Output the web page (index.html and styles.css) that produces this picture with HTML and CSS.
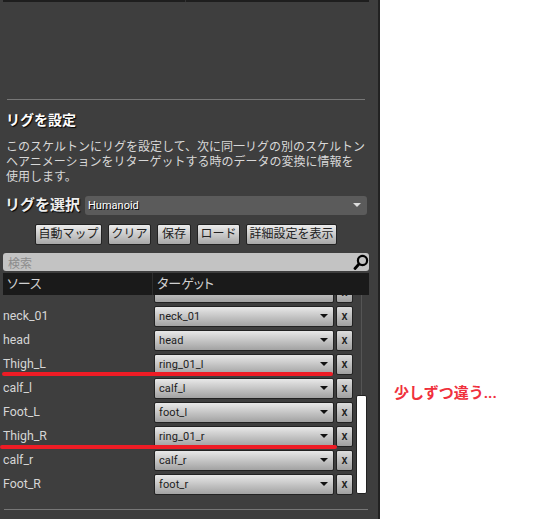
FILE: index.html
```html
<!DOCTYPE html>
<html lang="ja">
<head>
    <meta charset="UTF-8">
    <title>リグを設定</title>
    <link rel="stylesheet" href="styles.css">
</head>
<body>
    <div class="panel">
        <div class="top-bar"><span class="top-split"></span></div>
        <div class="divider first"></div>
        <h2 class="title">リグを設定</h2>
        <p class="desc">このスケルトンにリグを設定して、次に同一リグの別のスケルトン<br>ヘアニメーションをリターゲットする時のデータの変換に情報を<br>使用します。</p>

        <div class="rig-select">
            <span class="rig-label">リグを選択</span>
            <div class="rig-combo">
                <span>Humanoid</span>
                <span class="arrow light"></span>
            </div>
        </div>

        <div class="buttons">
            <button>自動マップ</button>
            <button>クリア</button>
            <button>保存</button>
            <button>ロード</button>
            <button>詳細設定を表示</button>
        </div>

        <div class="search">
            <span>検索</span>
            <svg class="search-icon" width="16" height="16" viewBox="0 0 16 16">
                <circle cx="9.5" cy="6.5" r="4.6" fill="none" stroke="#000" stroke-width="2.2"/>
                <path d="M6 10 L2 14.5" stroke="#000" stroke-width="2.8" stroke-linecap="round"/>
            </svg>
        </div>

        <div class="table-head">
            <div class="col-source">ソース</div>
            <div class="col-target">ターゲット</div>
        </div>

        <div class="table-body">
            <div class="rows">
                <div class="row"><span class="name"></span><div class="combo"><span></span><span class="arrow"></span></div><div class="clear">x</div></div>
                <div class="row"><span class="name">neck_01</span><div class="combo"><span>neck_01</span><span class="arrow"></span></div><div class="clear">x</div></div>
                <div class="row"><span class="name">head</span><div class="combo"><span>head</span><span class="arrow"></span></div><div class="clear">x</div></div>
                <div class="row"><span class="name">Thigh_L</span><div class="combo"><span>ring_01_l</span><span class="arrow"></span></div><div class="clear">x</div></div>
                <div class="row"><span class="name">calf_l</span><div class="combo"><span>calf_l</span><span class="arrow"></span></div><div class="clear">x</div></div>
                <div class="row"><span class="name">Foot_L</span><div class="combo"><span>foot_l</span><span class="arrow"></span></div><div class="clear">x</div></div>
                <div class="row"><span class="name">Thigh_R</span><div class="combo"><span>ring_01_r</span><span class="arrow"></span></div><div class="clear">x</div></div>
                <div class="row"><span class="name">calf_r</span><div class="combo"><span>calf_r</span><span class="arrow"></span></div><div class="clear">x</div></div>
                <div class="row"><span class="name">Foot_R</span><div class="combo"><span>foot_r</span><span class="arrow"></span></div><div class="clear">x</div></div>
            </div>
            <div class="scrollbar">
                <div class="track"></div>
                <div class="thumb"></div>
            </div>
        </div>

        <div class="divider last"></div>

        <!-- red marks drawn over the screenshot -->
        <div class="mark mark-left"></div>
        <div class="mark mark-right"></div>
    </div>

    <div class="note">少しずつ違う...</div>
</body>
</html>
```

FILE: styles.css
```css
* {
    box-sizing: border-box;
}

html, body {
    height: 100%;
}

body {
    margin: 0;
    display: flex;
    background-color: #fff;
    font-family: Roboto, "Noto Sans CJK JP", sans-serif;
    overflow: hidden;
}

.panel {
    position: relative;
    width: 380px;
    height: 519px;
    flex: none;
    background-color: #3e3e3e;
    border-right: 2px solid #222;
    overflow: hidden;
}

.top-bar {
    position: relative;
    height: 2px;
    margin: 0 9px 0 3px;
    background-color: #1e1e1e;
}

.top-split {
    position: absolute;
    left: 182px;
    top: 0;
    width: 1px;
    height: 2px;
    background-color: #333;
}

.divider {
    height: 1px;
    background-color: #777;
}

.divider.first {
    margin: 97px 13px 0 7px;
}

.divider.last {
    margin: 13px 10px 0 4px;
}

.title {
    margin: 10px 0 0 6px;
    font-size: 14px;
    line-height: 20px;
    font-weight: 700;
    color: #fff;
    text-shadow: 1px 1px 1px #000;
}

.desc {
    margin: 10px 0 0 6px;
    font-size: 12px;
    line-height: 15px;
    color: #d8d8d8;
}

.rig-select {
    display: flex;
    align-items: center;
    gap: 5px;
    margin: 10px 11px 0 5px;
}

.rig-label {
    font-size: 15px;
    line-height: 20px;
    font-weight: 700;
    color: #eee;
    text-shadow: 1px 1px 1px #000;
}

.rig-combo {
    flex: 1;
    height: 19px;
    padding: 0 6px 0 3px;
    display: flex;
    align-items: center;
    justify-content: space-between;
    background-color: #5b5b5b;
    border-radius: 3px;
    font-size: 11px;
    color: #fff;
    text-shadow: 1px 1px 0 #000;
}

.buttons {
    display: flex;
    justify-content: center;
    gap: 6px;
    margin: 9px 0 0 0;
    padding-right: 24px;
    padding-left: 18px;
}

button {
    height: 21px;
    min-width: 34px;
    padding: 0 2.5px;
    border: 1px solid #222;
    border-radius: 2px;
    background: linear-gradient(#ececec, #a8a8a8);
    font-family: inherit;
    font-size: 12px;
    line-height: 17px;
    color: #222;
}

.search {
    display: flex;
    align-items: center;
    justify-content: space-between;
    height: 18px;
    margin: 8px 9px 0 3px;
    padding: 0 0 0 5px;
    background-color: #c3c3c3;
    border-radius: 3px;
    font-size: 12px;
    color: #8c8c8c;
}

.table-head {
    position: relative;
    z-index: 1;
    display: flex;
    height: 22px;
    margin: 2px 9px 0 3px;
    background-color: #1a1a1a;
    font-size: 13px;
    line-height: 21px;
    color: #d0d0d0;
    font-feature-settings: "palt";
}

.col-source {
    width: 150px;
    padding-left: 4px;
    border-right: 1px solid #2e2e2e;
}

.col-target {
    padding-left: 4px;
}

.table-body {
    display: flex;
    margin-top: -15px;
}

.rows {
    width: 353px;
    flex: none;
}

.row {
    display: flex;
    align-items: center;
    height: 24px;
    padding-left: 3px;
}

.name {
    width: 151px;
    flex: none;
    font-size: 12.3px;
    color: #d6d6d6;
    padding-bottom: 1px;
}

.combo {
    display: flex;
    align-items: center;
    justify-content: space-between;
    width: 180px;
    height: 21px;
    padding: 0 5px 0 4px;
    border: 1px solid #222;
    border-radius: 2px;
    background: linear-gradient(#e8e8e8, #a2a2a2);
    font-size: 11px;
    letter-spacing: 0.1px;
    color: #1c1c1c;
}

.arrow {
    width: 0;
    height: 0;
    border-left: 4px solid transparent;
    border-right: 4px solid transparent;
    border-top: 4px solid #111;
}

.arrow.light {
    border-top-color: #ddd;
}

.clear {
    width: 17px;
    height: 21px;
    margin-left: 2px;
    flex: none;
    border: 1px solid #222;
    border-radius: 2px;
    background: linear-gradient(#dcdcdc, #a0a0a0);
    font-size: 12px;
    font-weight: 500;
    line-height: 19px;
    text-align: center;
    color: #222;
}

.scrollbar {
    display: flex;
    flex-direction: column;
    align-items: center;
    width: 11px;
    margin-left: 3px;
    padding-top: 11px;
}

.track {
    width: 1px;
    height: 104px;
    background-color: #555;
}

.thumb {
    width: 11px;
    height: 99px;
    flex: none;
    background-color: #fff;
    border: 1px solid #222;
    border-radius: 2px;
}

.mark {
    position: absolute;
    background-color: #ee1c25;
    border-radius: 2px;
}

.mark-left {
    left: 2px;
    top: 372px;
    width: 331px;
    height: 4px;
}

.mark-right {
    left: 0;
    top: 444.5px;
    width: 337px;
    height: 4px;
}

.note {
    margin: 383px 0 0 14px;
    font-size: 15px;
    line-height: 20px;
    font-weight: 700;
    color: #f0303c;
}
```
